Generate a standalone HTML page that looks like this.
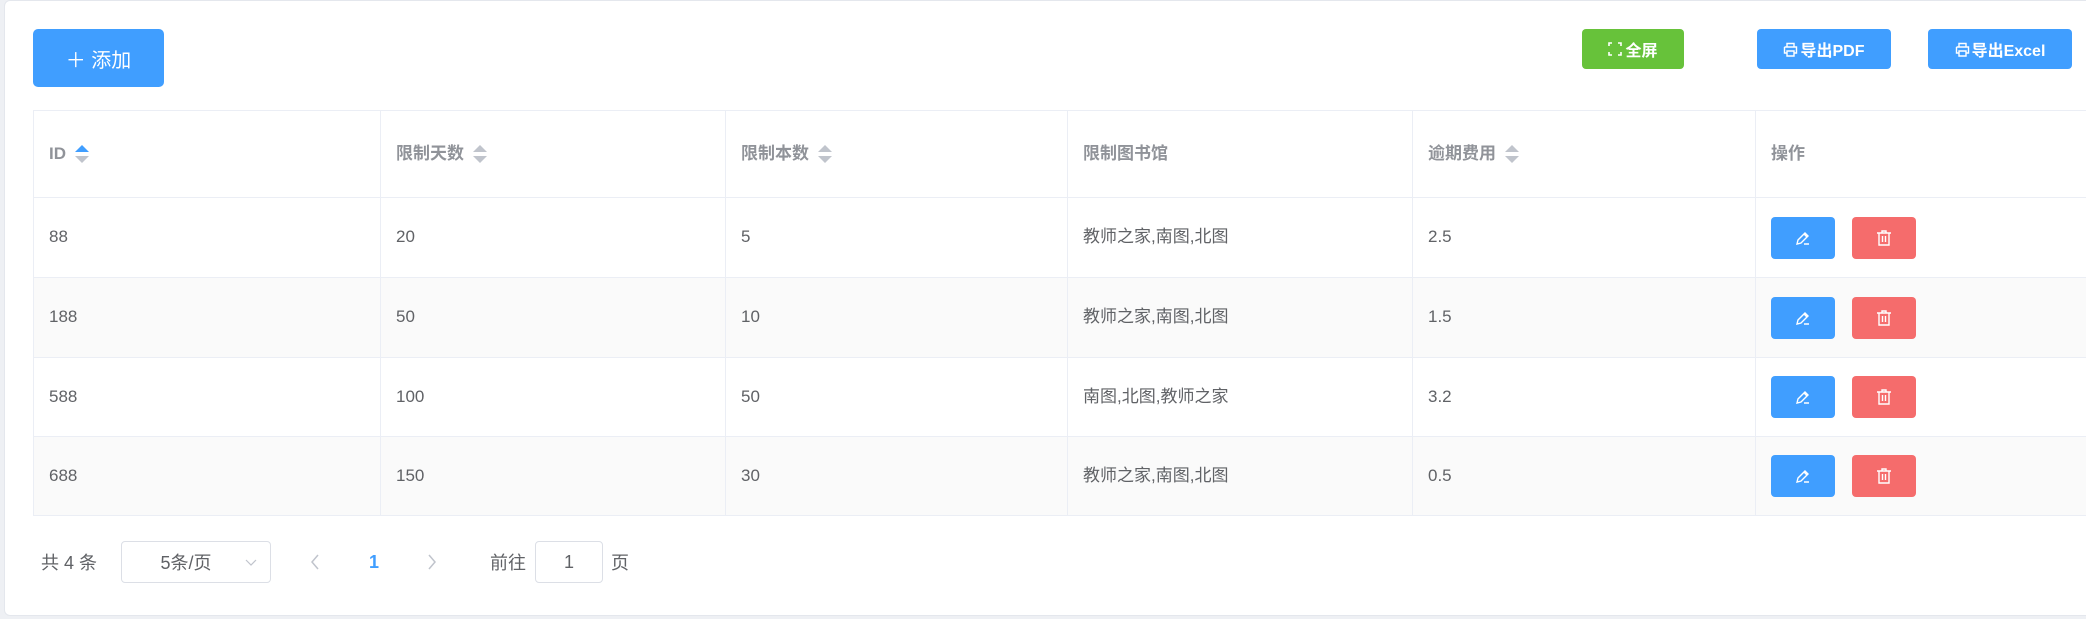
<!DOCTYPE html>
<html><head><meta charset="utf-8"><style>
*{box-sizing:border-box;margin:0;padding:0}
body{width:2086px;height:619px;background:#eef0f4;font-family:"Liberation Sans","Noto Sans CJK SC",sans-serif;overflow:hidden;position:relative}
.card{position:absolute;left:4px;top:0;width:2100px;height:616px;background:#fff;border-radius:6px;border:1px solid #e4e7ed}
.btn{position:absolute;color:#fff;border-radius:4px;display:flex;align-items:center;justify-content:center;font-weight:bold}
.tbl{position:absolute;left:33px;top:110px;width:2060px;border-top:1px solid #ebeef5;border-left:1px solid #ebeef5}
.row{display:flex;border-bottom:1px solid #ebeef5}
.c{border-right:1px solid #ebeef5;padding-left:15px;display:flex;align-items:center;font-size:17px;color:#606266;line-height:1.2}
.h .c{color:#909399;font-weight:bold}
.row.s{background:#fafafa}
.w1{width:347px}.w2{width:345px}.w3{width:342px}.w4{width:345px}.w5{width:343px}.w6{flex:1;border-right:none}
.sort{display:inline-flex;flex-direction:column;margin-left:9px;gap:4px}
.up{width:0;height:0;border-left:7px solid transparent;border-right:7px solid transparent;border-bottom:7px solid #c0c4cc}
.dn{width:0;height:0;border-left:7px solid transparent;border-right:7px solid transparent;border-top:7px solid #c0c4cc}
.ab{width:64px;height:42px;border-radius:4px;display:flex;align-items:center;justify-content:center}
.pg{position:absolute;top:541px;height:42px;display:flex;align-items:center;font-size:18px;color:#606266}
</style></head><body>
<div class="card"></div>
<div class="btn" style="left:33px;top:29px;width:131px;height:58px;background:#409eff;font-size:20px;font-weight:normal;border-radius:5px">＋ 添加</div>
<div class="btn" style="left:1582px;top:29px;width:102px;height:40px;background:#67c23a;font-size:16px">
<svg width="14" height="14" viewBox="0 0 14 14" style="margin-right:3px" fill="none" stroke="#fff" stroke-width="1.6"><path d="M1 4V1h3M10 1h3v3M13 10v3h-3M4 13H1v-3"/></svg>全屏</div>
<div class="btn" style="left:1757px;top:29px;width:134px;height:40px;background:#409eff;font-size:16px">
<svg width="15" height="15" viewBox="0 0 15 15" style="margin-right:2px" fill="none" stroke="#fff" stroke-width="1.4"><path d="M4 5V1.5h7V5M1.5 5h12v6h-2M3.5 11h-2V5M4 9h7v5H4z"/></svg>导出PDF</div>
<div class="btn" style="left:1928px;top:29px;width:144px;height:40px;background:#409eff;font-size:16px">
<svg width="15" height="15" viewBox="0 0 15 15" style="margin-right:2px" fill="none" stroke="#fff" stroke-width="1.4"><path d="M4 5V1.5h7V5M1.5 5h12v6h-2M3.5 11h-2V5M4 9h7v5H4z"/></svg>导出Excel</div>

<div class="tbl">
<div class="row h" style="height:87px">
<div class="c w1">ID<span class="sort"><i class="up" style="border-bottom-color:#409eff"></i><i class="dn"></i></span></div>
<div class="c w2">限制天数<span class="sort"><i class="up"></i><i class="dn"></i></span></div>
<div class="c w3">限制本数<span class="sort"><i class="up"></i><i class="dn"></i></span></div>
<div class="c w4">限制图书馆</div>
<div class="c w5">逾期费用<span class="sort"><i class="up"></i><i class="dn"></i></span></div>
<div class="c w6">操作</div>
</div>
<div class="row" style="height:80px"><div class="c w1">88</div><div class="c w2">20</div><div class="c w3">5</div><div class="c w4">教师之家,南图,北图</div><div class="c w5">2.5</div><div class="c w6"><div class="ab" style="background:#409eff"><svg width="20" height="20" viewBox="0 0 20 20" fill="none" stroke="#fff" stroke-width="1.4"><path d="M4 16l1-4 7-7 3 3-7 7zM11 6l3 3M11 16h5"/></svg></div><div class="ab" style="background:#f56c6c;margin-left:17px"><svg width="20" height="20" viewBox="0 0 20 20" fill="none" stroke="#fff" stroke-width="1.4"><path d="M3 5h14M8 5V3h4v2M5 5v12h10V5M8.5 8v6M11.5 8v6"/></svg></div></div></div>
<div class="row s" style="height:80px"><div class="c w1">188</div><div class="c w2">50</div><div class="c w3">10</div><div class="c w4">教师之家,南图,北图</div><div class="c w5">1.5</div><div class="c w6"><div class="ab" style="background:#409eff"><svg width="20" height="20" viewBox="0 0 20 20" fill="none" stroke="#fff" stroke-width="1.4"><path d="M4 16l1-4 7-7 3 3-7 7zM11 6l3 3M11 16h5"/></svg></div><div class="ab" style="background:#f56c6c;margin-left:17px"><svg width="20" height="20" viewBox="0 0 20 20" fill="none" stroke="#fff" stroke-width="1.4"><path d="M3 5h14M8 5V3h4v2M5 5v12h10V5M8.5 8v6M11.5 8v6"/></svg></div></div></div>
<div class="row" style="height:79px"><div class="c w1">588</div><div class="c w2">100</div><div class="c w3">50</div><div class="c w4">南图,北图,教师之家</div><div class="c w5">3.2</div><div class="c w6"><div class="ab" style="background:#409eff"><svg width="20" height="20" viewBox="0 0 20 20" fill="none" stroke="#fff" stroke-width="1.4"><path d="M4 16l1-4 7-7 3 3-7 7zM11 6l3 3M11 16h5"/></svg></div><div class="ab" style="background:#f56c6c;margin-left:17px"><svg width="20" height="20" viewBox="0 0 20 20" fill="none" stroke="#fff" stroke-width="1.4"><path d="M3 5h14M8 5V3h4v2M5 5v12h10V5M8.5 8v6M11.5 8v6"/></svg></div></div></div>
<div class="row s" style="height:79px"><div class="c w1">688</div><div class="c w2">150</div><div class="c w3">30</div><div class="c w4">教师之家,南图,北图</div><div class="c w5">0.5</div><div class="c w6"><div class="ab" style="background:#409eff"><svg width="20" height="20" viewBox="0 0 20 20" fill="none" stroke="#fff" stroke-width="1.4"><path d="M4 16l1-4 7-7 3 3-7 7zM11 6l3 3M11 16h5"/></svg></div><div class="ab" style="background:#f56c6c;margin-left:17px"><svg width="20" height="20" viewBox="0 0 20 20" fill="none" stroke="#fff" stroke-width="1.4"><path d="M3 5h14M8 5V3h4v2M5 5v12h10V5M8.5 8v6M11.5 8v6"/></svg></div></div></div>
</div>

<div class="pg" style="left:41px">共 4 条</div>
<div class="pg" style="left:121px;width:150px;border:1px solid #dcdfe6;border-radius:4px;justify-content:center;padding-right:20px">5条/页
<svg style="position:absolute;right:12px" width="14" height="10" viewBox="0 0 14 10" fill="none" stroke="#c0c4cc" stroke-width="1.2"><path d="M2 3l5 5 5-5"/></svg></div>
<div class="pg" style="left:309px"><svg width="12" height="18" viewBox="0 0 12 18" fill="none" stroke="#c0c4cc" stroke-width="1.5"><path d="M9 2L3 9l6 7"/></svg></div>
<div class="pg" style="left:369px;color:#409eff;font-weight:bold">1</div>
<div class="pg" style="left:426px"><svg width="12" height="18" viewBox="0 0 12 18" fill="none" stroke="#c0c4cc" stroke-width="1.5"><path d="M3 2l6 7-6 7"/></svg></div>
<div class="pg" style="left:490px">前往</div>
<div class="pg" style="left:535px;width:68px;border:1px solid #dcdfe6;border-radius:4px;justify-content:center">1</div>
<div class="pg" style="left:611px">页</div>
</body></html>
